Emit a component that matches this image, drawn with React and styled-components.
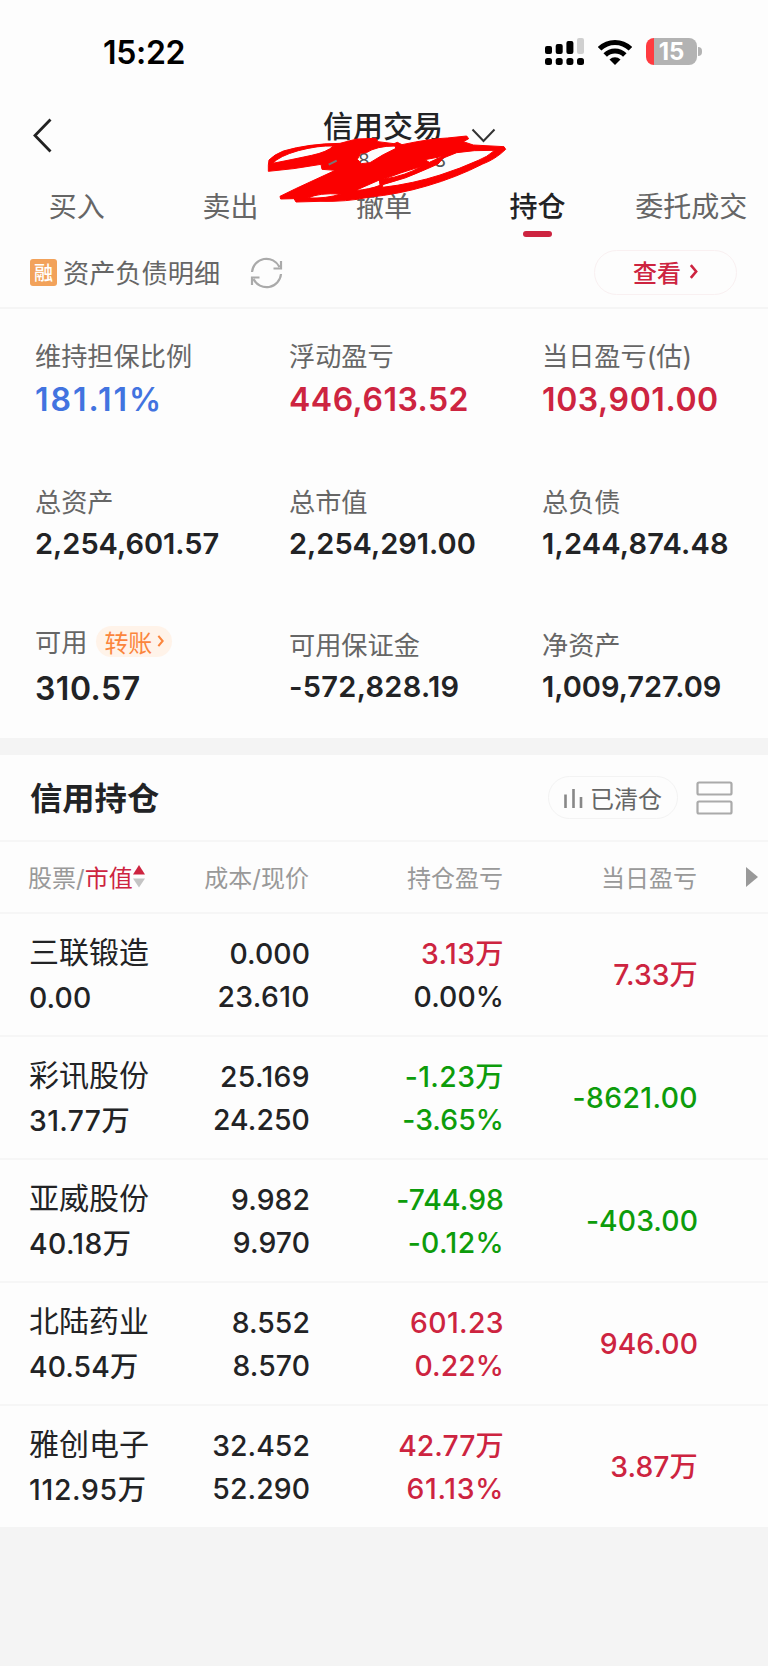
import React from "react";
import styled, { createGlobalStyle } from "styled-components";

const colors = {
  red: "#cd2440",
  green: "#0d9c0b",
  blue: "#4273e0",
  dark: "#222325",
  gray: "#666",
  light: "#999",
};

const GlobalStyle = createGlobalStyle`
  * {
    box-sizing: border-box;
  }
  body {
    margin: 0;
    background: #f4f4f4;
    color: ${colors.dark};
    font-family: Inter, "Noto Sans CJK SC", sans-serif;
  }
  svg {
    display: block;
    flex: none;
  }
`;

const Screen = styled.main`
  width: 768px;
  height: 1666px;
  overflow: hidden;
`;

const StatusBar = styled.div`
  height: 106px;
  padding: 0 66px 3px 103px;
  display: flex;
  align-items: center;
  background: #fdfdfd;
`;

const Clock = styled.time`
  margin: 2px auto 0 0;
  color: #000;
  font-size: 32px;
  font-weight: 600;
  letter-spacing: -0.3px;
`;

const StatusIcons = styled.div`
  display: flex;
  align-items: center;
  gap: 14px;
`;

const Battery = styled.div`
  position: relative;
  width: 51px;
  height: 27px;
  margin-right: 5px;
  border-radius: 8px;
  background: linear-gradient(90deg, #ff3b40 8px, #b3b3b3 8px);
  color: #fff;
  font-size: 24px;
  font-weight: 700;
  line-height: 27px;
  text-align: center;
  &::after {
    content: "";
    position: absolute;
    right: -5px;
    top: 9px;
    width: 4px;
    height: 9px;
    border-radius: 0 4px 4px 0;
    background: #b3b3b3;
  }
`;

const Header = styled.header`
  position: relative;
  height: 78px;
  padding: 0 34px 0 32px;
  display: grid;
  grid-template-columns: 100px 1fr 100px;
  background: #fdfdfd;
`;

const BackIcon = styled.svg`
  margin: 12px 0 0 1px;
`;

const TitleBlock = styled.div`
  display: flex;
  flex-direction: column;
  align-items: center;
`;

const Title = styled.h1`
  margin: 0;
  font-size: 30px;
  font-weight: 500;
  line-height: 40px;
`;

const Account = styled.div`
  width: 88px;
  margin-left: 38px;
  display: flex;
  justify-content: space-between;
  color: #555;
  font-size: 19px;
  line-height: 30px;
`;

const TitleArrow = styled.svg`
  position: absolute;
  left: 471px;
  top: 22px;
`;

const Scribble = styled.svg`
  position: absolute;
  left: 240px;
  top: -16px;
  z-index: 2;
`;

const Tabs = styled.nav`
  height: 58px;
  display: grid;
  grid-template-columns: repeat(5, 1fr);
  background: #fdfdfd;
`;

const Tab = styled.a`
  display: flex;
  flex-direction: column;
  align-items: center;
  white-space: nowrap;
  color: ${(p) => (p.$active ? colors.dark : colors.gray)};
  font-size: 28px;
  font-weight: ${(p) => (p.$active ? 500 : 400)};
  line-height: 47px;
  &::after {
    content: "";
    width: 29px;
    height: 6px;
    border-radius: 3px;
    background: ${(p) => (p.$active ? colors.red : "transparent")};
  }
`;

const DetailBar = styled.div`
  height: 67px;
  padding: 0 31px 4px 30px;
  display: flex;
  align-items: center;
  background: #fdfdfd;
  border-bottom: 2px solid #f5f5f5;
`;

const MarginBadge = styled.span`
  width: 27px;
  height: 27px;
  border-radius: 3px;
  background: #f2a25a;
  color: #fff;
  font: 500 19px/26px "Noto Sans CJK SC", sans-serif;
  text-align: center;
`;

const DetailText = styled.span`
  margin: 0 30px 2px 6px;
  color: ${colors.gray};
  font-size: 26.2px;
`;

const ViewButton = styled.button`
  width: 143px;
  height: 45px;
  margin-left: auto;
  padding: 0 0 2px;
  display: flex;
  align-items: center;
  justify-content: center;
  gap: 8px;
  border: 1.5px solid #f9f0f1;
  border-radius: 23px;
  background: transparent;
  color: ${colors.red};
  font: 500 24px "Noto Sans CJK SC", sans-serif;
`;

const Summary = styled.section`
  height: 429px;
  padding: 25px 0 0 35px;
  display: grid;
  grid-template-columns: 254px 253px 1fr;
  grid-template-rows: 146px 143px 1fr;
  background: #fdfdfd;
`;

const SummaryItem = styled.div`
  display: flex;
  flex-direction: column;
`;

const Label = styled.div`
  height: ${(p) => (p.$raised ? 36 : 41)}px;
  margin-bottom: ${(p) => (p.$raised ? 5 : 0)}px;
  display: flex;
  align-items: center;
  color: ${colors.gray};
  font-size: 26.2px;
`;

const Amount = styled.div`
  margin-top: ${(p) => (p.$large ? 4 : 2)}px;
  color: ${(p) => p.$color || colors.dark};
  font-size: ${(p) => (p.$large ? 32 : 29)}px;
  font-weight: 600;
  line-height: 42px;
  letter-spacing: ${(p) => p.$spacing || 0}px;
`;

const Transfer = styled.span`
  height: 31px;
  margin-left: 9px;
  padding: 0 8px;
  display: flex;
  align-items: center;
  gap: 5px;
  border-radius: 16px;
  background: #fff3e9;
  color: #fb853c;
  font-size: 24px;
`;

const Holdings = styled.section`
  margin-top: 17px;
  background: #fdfdfd;
`;

const HoldingsBar = styled.div`
  height: 87px;
  padding: 0 35px 0 30px;
  display: flex;
  align-items: center;
  border-bottom: 2px solid #f6f6f6;
`;

const SectionTitle = styled.h2`
  margin: 0 auto 4px 0;
  font-size: 32.3px;
  font-weight: 700;
`;

const ClearedButton = styled.button`
  width: 130px;
  height: 43px;
  margin-right: 18px;
  padding: 0;
  display: flex;
  align-items: center;
  justify-content: center;
  gap: 7px;
  border: 1.5px solid #f3f3f3;
  border-radius: 22px;
  background: transparent;
  color: ${colors.gray};
  font: 400 24px "Noto Sans CJK SC", sans-serif;
`;

const Row = styled.div`
  height: 123px;
  padding: 0 70px 0 29px;
  display: grid;
  grid-template-columns: 141px 140px 194px 194px;
  align-items: center;
  border-bottom: 2px solid #f6f6f6;
  &:last-child {
    height: 121px;
    border-bottom: 0;
  }
`;

const HeadRow = styled(Row)`
  position: relative;
  height: 72px;
  padding: 0 71px 2px 28px;
  color: ${colors.light};
  font-size: 24px;
  text-align: right;
`;

const SortHead = styled.div`
  display: flex;
  align-items: center;
  white-space: nowrap;
  b {
    color: ${colors.red};
    font-weight: 400;
  }
`;

const MoreArrow = styled.svg`
  position: absolute;
  left: 746px;
  top: 25px;
`;

const Stock = styled.div`
  white-space: nowrap;
`;

const StockName = styled.div`
  margin-top: -2px;
  font-size: 30px;
  line-height: 44px;
`;

const Figure = styled.div`
  margin-bottom: ${(p) => (p.$single ? -2 : 0)}px;
  color: ${(p) => p.$color || colors.dark};
  font-size: 28.3px;
  font-weight: 550;
  line-height: 43px;
  letter-spacing: ${(p) => p.$spacing}px;
  text-align: right;
  white-space: nowrap;
`;

const Pair = styled.div`
  padding-top: 2px;
`;

const MarketValue = styled(Figure)`
  padding-top: 3px;
  margin-bottom: -2px;
  text-align: left;
`;

const tabs = ["买入", "卖出", "撤单", "持仓", "委托成交"];

const summary = [
  { label: "维持担保比例", value: "181.11%", large: true, color: colors.blue, spacing: 2 },
  { label: "浮动盈亏", value: "446,613.52", large: true, color: colors.red, spacing: 0.5 },
  { label: "当日盈亏(估)", value: "103,901.00", large: true, color: colors.red, spacing: 0.6 },
  { label: "总资产", value: "2,254,601.57" },
  { label: "总市值", value: "2,254,291.00" },
  { label: "总负债", value: "1,244,874.48", spacing: 0.2 },
  { label: "可用", value: "310.57", large: true, spacing: 0.5, transfer: true },
  { label: "可用保证金", value: "-572,828.19", spacing: 0.3 },
  { label: "净资产", value: "1,009,727.09" },
];

const stocks = [
  { name: "三联锻造", value: "0.00", cost: "0.000", price: "23.610", profit: "3.13万", rate: "0.00%", today: "7.33万", color: colors.red, rateColor: colors.dark },
  { name: "彩讯股份", value: "31.77万", cost: "25.169", price: "24.250", profit: "-1.23万", rate: "-3.65%", today: "-8621.00", color: colors.green },
  { name: "亚威股份", value: "40.18万", cost: "9.982", price: "9.970", profit: "-744.98", rate: "-0.12%", today: "-403.00", color: colors.green },
  { name: "北陆药业", value: "40.54万", cost: "8.552", price: "8.570", profit: "601.23", rate: "0.22%", today: "946.00", color: colors.red },
  { name: "雅创电子", value: "112.95万", cost: "32.452", price: "52.290", profit: "42.77万", rate: "61.13%", today: "3.87万", color: colors.red },
];

const spacingFor = (text) => 0.1 + (text.split("1").length - 1) * 0.3;

const Chevron = ({ width, height, stroke = 2 }) => (
  <svg width={width} height={height} viewBox="0 0 8 14" fill="none" stroke="currentColor" strokeWidth={stroke}>
    <path d="M1.5 1 6.5 7 1.5 13" />
  </svg>
);

function Signal() {
  return (
    <svg width="39" height="28" viewBox="0 0 39 28">
      <rect x="0" y="8" width="7" height="8" rx="2" />
      <rect x="10.7" y="6" width="7" height="10" rx="2" />
      <rect x="21.4" y="3" width="7" height="13" rx="2" />
      <rect x="32" y="0" width="7" height="16" rx="2" fill="#d0d0d0" />
      {[0, 10.7, 21.4, 32].map((x) => (
        <rect key={x} x={x} y="20" width="7" height="7" rx="2.5" />
      ))}
    </svg>
  );
}

function Wifi() {
  return (
    <svg width="34" height="26" viewBox="0 0 34 26" fill="none" stroke="#000" strokeWidth="5">
      <path d="M1.6 9.8a22 22 0 0 1 30.8 0" />
      <path d="M7.2 16a14 14 0 0 1 19.6 0" />
      <path d="M17 26 11.5 20.5a7.8 7.8 0 0 1 11 0z" fill="#000" stroke="none" />
    </svg>
  );
}

export default function App() {
  return (
    <Screen>
      <GlobalStyle />
      <StatusBar>
        <Clock>15:22</Clock>
        <StatusIcons>
          <Signal />
          <Wifi />
          <Battery>15</Battery>
        </StatusIcons>
      </StatusBar>

      <Header>
        <BackIcon width="19" height="35" viewBox="0 0 19 35" fill="none" stroke="#222" strokeWidth="2.8">
          <path d="M17.5 1.5 2 17.5l15.5 16" />
        </BackIcon>
        <TitleBlock>
          <Title>信用交易</Title>
          <Account>
            <span>8</span>
            <span>8</span>
          </Account>
        </TitleBlock>
        <TitleArrow width="25" height="15" viewBox="0 0 25 15" fill="none" stroke="#333" strokeWidth="2">
          <path d="M1.5 1.5 12.5 13l11-11.5" />
        </TitleArrow>
        <Scribble width="290" height="130" viewBox="0 0 870 390">
          <path
            fill="#fb0000"
            stroke="#fb0000"
            strokeWidth="3"
            strokeLinejoin="round"
            fillRule="evenodd"
            d="M85 244Q84 224 87 210 102 194 130 183 205 161 300 160L350 147 408 145 414 155 462 161 472 157 486 164Q570 146 622 144L680 138 686 146 670 155 700 165 792 170 797 178Q766 208 728 222 650 262 560 288 480 312 385 322 320 336 240 334L168 336 162 326 122 327 120 319Q170 294 210 276L286 241 246 238 243 223Q160 238 85 244Z
            M98 220Q118 198 175 182 235 166 280 168 262 186 215 196 150 210 98 220Z
            M379 188Q410 168 464 168L468 175Q430 192 390 218L364 221 352 208 362 190Z
            M703 182 764 181Q740 202 715 211 660 236 600 255 520 281 428 292L428 284Q500 266 560 237L594 222 610 204 650 188Z
            M430 268Q480 248 542 230 500 256 430 268Z
            M555 209 608 199 588 208 568 217Z
            M204 324Q236 308 302 312 260 326 204 324Z
            M345 302 418 270 420 286Q390 298 345 302Z"
          />
          <path d="M266 224 290 212" stroke="#777" strokeWidth="6" />
        </Scribble>
      </Header>

      <Tabs>
        {tabs.map((tab) => (
          <Tab key={tab} $active={tab === "持仓"}>
            {tab}
          </Tab>
        ))}
      </Tabs>

      <DetailBar>
        <MarginBadge>融</MarginBadge>
        <DetailText>资产负债明细</DetailText>
        <svg width="33" height="32" viewBox="0 0 32 32" fill="none" stroke="#aaa" strokeWidth="2.2">
          <path d="M1.5 15A14.5 14.5 0 0 1 29 10M30.5 4v7.5H23" />
          <path d="M30.5 17A14.5 14.5 0 0 1 3 22M1.5 28v-7.5H9" />
        </svg>
        <ViewButton>
          查看
          <Chevron width={9} height={15} stroke={2.4} />
        </ViewButton>
      </DetailBar>

      <Summary>
        {summary.map((item) => (
          <SummaryItem key={item.label}>
            <Label $raised={item.transfer}>
              {item.label}
              {item.transfer && (
                <Transfer>
                  转账
                  <Chevron width={7} height={12} stroke={2.4} />
                </Transfer>
              )}
            </Label>
            <Amount $large={item.large} $color={item.color} $spacing={item.spacing}>
              {item.value}
            </Amount>
          </SummaryItem>
        ))}
      </Summary>

      <Holdings>
        <HoldingsBar>
          <SectionTitle>信用持仓</SectionTitle>
          <ClearedButton>
            <svg width="19" height="20" viewBox="0 0 19 20" stroke="#888" strokeWidth="2.6">
              <path d="M1.5 6.5V20M9.5 1V20M17 9V20" />
            </svg>
            已清仓
          </ClearedButton>
          <svg width="37" height="34" viewBox="0 0 37 34" fill="none" stroke="#aaa" strokeWidth="2.2">
            <rect x="1.5" y="1.5" width="34" height="12" rx="1.5" />
            <rect x="1.5" y="20.5" width="34" height="12" rx="1.5" />
          </svg>
        </HoldingsBar>

        <HeadRow>
          <SortHead>
            <span>
              股票/<b>市值</b>
            </span>
            <svg width="12" height="23" viewBox="0 0 12 23">
              <path d="M6 0 12 9.5H0z" fill={colors.red} />
              <path d="M6 22.5 0 13.5h12z" fill="#c4c4c4" />
            </svg>
          </SortHead>
          <div>成本/现价</div>
          <div>持仓盈亏</div>
          <div>当日盈亏</div>
          <MoreArrow width="12" height="20" viewBox="0 0 12 20">
            <path d="M0 0 12 10 0 20z" fill="#999" />
          </MoreArrow>
        </HeadRow>

        {stocks.map((s) => (
          <Row key={s.name}>
            <Stock>
              <StockName>{s.name}</StockName>
              <MarketValue $spacing={spacingFor(s.value)}>{s.value}</MarketValue>
            </Stock>
            <Pair>
              <Figure $spacing={spacingFor(s.cost)}>{s.cost}</Figure>
              <Figure $spacing={spacingFor(s.price)}>{s.price}</Figure>
            </Pair>
            <Pair>
              <Figure $color={s.color} $spacing={spacingFor(s.profit)}>{s.profit}</Figure>
              <Figure $color={s.rateColor || s.color} $spacing={spacingFor(s.rate)}>{s.rate}</Figure>
            </Pair>
            <Figure $single $color={s.color} $spacing={spacingFor(s.today)}>
              {s.today}
            </Figure>
          </Row>
        ))}
      </Holdings>
    </Screen>
  );
}
